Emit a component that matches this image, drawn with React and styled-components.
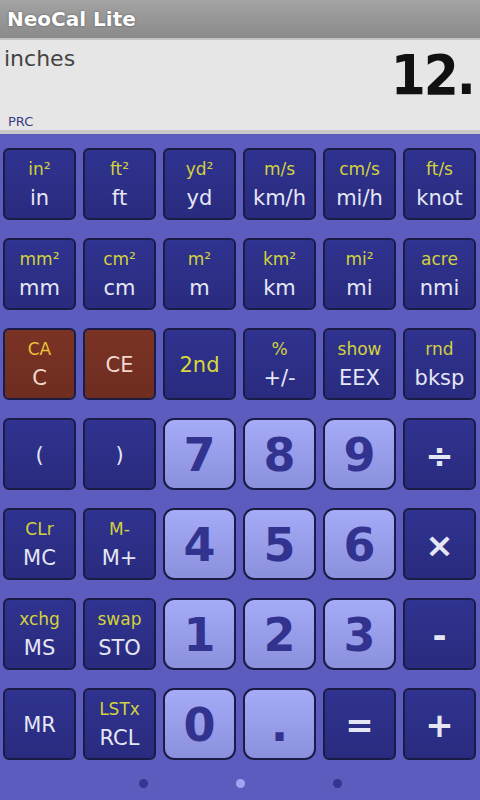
import React from "react";
import styled, { createGlobalStyle } from "styled-components";

const GlobalStyle = createGlobalStyle`
  html, body {
    margin: 0;
    padding: 0;
    background: #5b5cbe;
  }
  body {
    font-family: "DejaVu Sans", "Noto Sans", sans-serif;
  }
`;

const Screen = styled.div`
  width: 480px;
  height: 800px;
  display: flex;
  flex-direction: column;
  background: #5b5cbe;
  overflow: hidden;
`;

const TitleBar = styled.div`
  height: 38px;
  display: flex;
  align-items: center;
  padding-left: 7px;
  background: linear-gradient(#a3a3a3, #8a8a8a);
  border-bottom: 2px solid #c4c4c4;
  color: #ffffff;
  font-size: 20px;
  font-weight: bold;
  text-shadow: 0 0 2px rgba(0, 0, 0, 0.5);
`;

const Display = styled.div`
  height: 90px;
  position: relative;
  background: #e6e6e6;
  border-bottom: 4px solid #c8c8c8;
  display: flex;
  justify-content: space-between;
  padding: 0 6px 0 4px;
`;

const Unit = styled.div`
  font-size: 22px;
  color: #444444;
  margin-top: 6px;
`;

const Value = styled.div`
  font-family: "DejaVu Sans Condensed", "DejaVu Sans", sans-serif;
  font-size: 56px;
  font-weight: bold;
  color: #111111;
  letter-spacing: -2px;
  margin-top: 2px;
`;

const Mode = styled.div`
  position: absolute;
  left: 8px;
  bottom: 1px;
  font-size: 13px;
  color: #3c3c84;
`;

const Keypad = styled.div`
  display: grid;
  grid-template-columns: repeat(6, 73px);
  grid-auto-rows: 72px;
  column-gap: 7px;
  row-gap: 18px;
  padding: 14px 4px 0 3px;
`;

const Key = styled.div`
  box-sizing: border-box;
  border: 2px solid #1b1c46;
  border-radius: ${({ $digit }) => ($digit ? "11px" : "6px")};
  background: ${({ $digit, $red }) =>
    $digit
      ? "linear-gradient(#a6abf8, #8b90dc)"
      : $red
      ? "linear-gradient(#7a3324, #6e2d20)"
      : "linear-gradient(#30338f, #292b7f)"};
  display: flex;
  flex-direction: column;
  align-items: center;
  justify-content: center;
  gap: 6px;
  padding-top: 2px;
`;

const Shift = styled.span`
  font-size: 17px;
  line-height: 20px;
  color: ${({ $red }) => ($red ? "#e6c23a" : "#d2d23c")};
`;

const Main = styled.span`
  font-size: ${({ $big }) => ($big ? "34px" : "21px")};
  line-height: 26px;
  color: ${({ $red }) => ($red ? "#f2d9d0" : "#e4e6f4")};
  font-weight: ${({ $big }) => ($big ? "bold" : "normal")};
`;

const SecondLabel = styled.span`
  font-size: 21px;
  line-height: 26px;
  color: #d8d83a;
`;

const Digit = styled.span`
  font-size: 46px;
  font-weight: bold;
  color: #31338f;
  line-height: 1;
`;

const Dots = styled.div`
  flex: 1;
  display: flex;
  justify-content: center;
  align-items: center;
  gap: 88px;
  padding-top: 6px;
`;

const Dot = styled.span`
  width: 9px;
  height: 9px;
  border-radius: 50%;
  background: ${({ $on }) => ($on ? "#a0a4f4" : "#34368f")};
`;

const keys = [
  ["in²", "in"], ["ft²", "ft"], ["yd²", "yd"], ["m/s", "km/h"], ["cm/s", "mi/h"], ["ft/s", "knot"],
  ["mm²", "mm"], ["cm²", "cm"], ["m²", "m"], ["km²", "km"], ["mi²", "mi"], ["acre", "nmi"],
  ["CA", "C", "red"], ["", "CE", "red"], ["", "2nd", "second"], ["%", "+/-"], ["show", "EEX"], ["rnd", "bksp"],
  ["", "("], ["", ")"], ["", "7", "digit"], ["", "8", "digit"], ["", "9", "digit"], ["", "÷", "big"],
  ["CLr", "MC"], ["M-", "M+"], ["", "4", "digit"], ["", "5", "digit"], ["", "6", "digit"], ["", "×", "big"],
  ["xchg", "MS"], ["swap", "STO"], ["", "1", "digit"], ["", "2", "digit"], ["", "3", "digit"], ["", "-", "big"],
  ["", "MR"], ["LSTx", "RCL"], ["", "0", "digit"], ["", ".", "digit"], ["", "=", "big"], ["", "+", "big"],
];

export default function App() {
  return (
    <Screen>
      <GlobalStyle />
      <TitleBar>NeoCal Lite</TitleBar>
      <Display>
        <Unit>inches</Unit>
        <Value>12.</Value>
        <Mode>PRC</Mode>
      </Display>
      <Keypad>
        {keys.map(([shift, main, kind], i) => {
          if (kind === "digit") {
            return (
              <Key key={i} $digit>
                <Digit>{main}</Digit>
              </Key>
            );
          }
          const red = kind === "red";
          return (
            <Key key={i} $red={red}>
              {shift && <Shift $red={red}>{shift}</Shift>}
              {kind === "second" ? (
                <SecondLabel>{main}</SecondLabel>
              ) : (
                <Main $red={red} $big={kind === "big"}>
                  {main}
                </Main>
              )}
            </Key>
          );
        })}
      </Keypad>
      <Dots>
        <Dot />
        <Dot $on />
        <Dot />
      </Dots>
    </Screen>
  );
}
